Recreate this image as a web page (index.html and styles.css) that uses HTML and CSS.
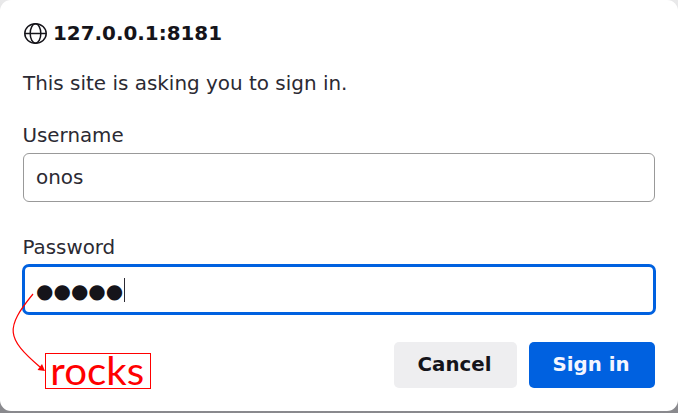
FILE: index.html
```html
<!DOCTYPE html>
<html lang="en">
<head>
<meta charset="utf-8">
<title>Sign in</title>
<link rel="stylesheet" href="styles.css">
</head>
<body>
<main class="dialog">
  <header class="origin">
    <svg class="globe" viewBox="0 0 24 24"><ellipse cx="11.5" cy="11.5" rx="10.7" ry="9.8"/><ellipse cx="11.5" cy="11.5" rx="5.3" ry="9.8"/><path d="M.8 11.5h21.4"/></svg>
    <span class="host">127.0.0.1:8181</span>
  </header>
  <p class="message">This site is asking you to sign in.</p>
  <div class="label">Username</div>
  <div class="field">onos</div>
  <div class="label second">Password</div>
  <div class="field focused"><span class="dots">●●●●●</span><span class="caret"></span></div>
  <footer class="actions">
    <button class="button">Cancel</button>
    <button class="button primary">Sign in</button>
  </footer>
  <svg class="arrow" viewBox="0 0 50 95"><path class="curve" d="M33 14C5 48 6 58 40 87"/><path class="head" d="M45 91l-7.5-1 4.5-6z"/></svg>
  <div class="note"><span class="note-text">rocks</span></div>
</main>
</body>
</html>
```
FILE: styles.css
```css
* { box-sizing: border-box; }
body { margin: 0; height: 413px; overflow: hidden; background: linear-gradient(#e9e9ea, #89898d); font-family: "DejaVu Sans", sans-serif; font-size: 19.95px; color: #2b2a33; }
.dialog { position: relative; height: 411px; padding: 18px 23px 0; background: #fff; border-radius: 11px; }
.origin { display: flex; align-items: center; height: 30px; }
.globe { width: 24px; height: 24px; margin-left: 1px; margin-top: 1px; fill: none; stroke: #15141a; stroke-width: 1.5; }
.host { margin-left: 5px; margin-top: 1px; font-size: 19.9px; font-weight: bold; color: #15141a; }
.message { margin: 20px 0 0; line-height: 30px; white-space: nowrap; }
.label { margin-top: 22px; margin-left: -.5px; height: 33px; line-height: 32px; font-size: 19.85px; }
.label.second { margin-top: 30px; }
.field { display: flex; align-items: center; width: 632px; height: 49px; padding: 0 12px 2px; border: 1.5px solid #999; border-radius: 6px; }
.focused { width: 634px; height: 51px; margin: -1px 0 0 -1px; padding: 0 11px; border: 3px solid #0061e0; border-radius: 7px; }
.dots { font-size: 20px; line-height: 30px; margin-top: 2px; color: #15141a; }
.caret { width: 1.5px; height: 24px; margin-left: .5px; background: #2b2a33; }
.actions { display: flex; justify-content: flex-end; gap: 12px; margin-top: 27px; margin-right: .5px; }
.button { width: 123px; height: 46px; padding: 0 1px 1px 0; border: 0; border-radius: 5px; background: #eeeef0; color: #15141a; font: bold 19.8px "DejaVu Sans", sans-serif; }
.primary { width: 126px; background: #0061e0; color: #f4f6ff; }
.arrow { position: absolute; left: 0; top: 280px; width: 50px; height: 95px; overflow: visible; }
.curve { fill: none; stroke: #f00; stroke-width: 1.2; }
.head { fill: #f00; }
.note { position: absolute; left: 45px; top: 353px; width: 106px; height: 36px; border: 1px solid #f00; color: #f00; font: 38px/33px Lato, sans-serif; text-align: center; }
.note-text { display: inline-block; transform: translateX(-1px) scaleX(1.06); }
```
